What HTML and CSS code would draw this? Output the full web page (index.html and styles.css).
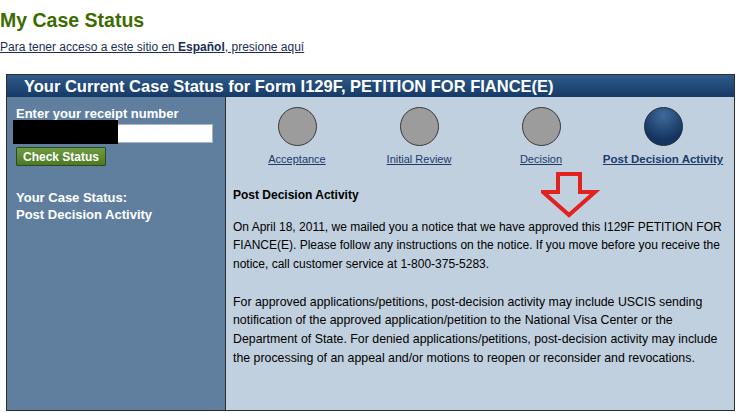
FILE: index.html
```html
<!DOCTYPE html>
<html lang="en">

<head>
  <meta charset="UTF-8">
  <meta name="viewport" content="width=device-width, initial-scale=1.0">
  <title>My Case Status</title>
  <link rel="stylesheet" href="styles.css">
</head>

<body>
  <h1 class="page-title">My Case Status</h1>
  <p class="lang-link"><a href="#">Para tener acceso a este sitio en <b>Español</b>, presione aquí</a></p>

  <div class="status-panel">
    <div class="panel-header">Your Current Case Status for Form I129F, PETITION FOR FIANCE(E)</div>

    <div class="panel-body">
      <div class="side">
        <label class="side-label" for="receipt">Enter your receipt number</label>
        <div class="receipt-field">
          <input type="text" id="receipt">
          <span class="redacted"></span>
        </div>
        <button class="check-btn">Check Status</button>

        <p class="side-status">Your Case Status:<br>Post Decision Activity</p>
      </div>

      <div class="main">
        <div class="steps">
          <div class="step">
            <span class="dot"></span>
            <a href="#">Acceptance</a>
          </div>
          <div class="step">
            <span class="dot"></span>
            <a href="#">Initial Review</a>
          </div>
          <div class="step">
            <span class="dot"></span>
            <a href="#">Decision</a>
          </div>
          <div class="step current">
            <span class="dot"></span>
            <a href="#">Post Decision Activity</a>
          </div>
        </div>

        <!-- red marker drawn over the page -->
        <svg class="marker" width="60" height="48" viewBox="0 0 60 48">
          <path d="M17 3 H39 V21 H54 L28 44 L2 21 H17 Z" fill="none" stroke="#e3211f" stroke-width="4" stroke-linejoin="miter"/>
        </svg>

        <h3 class="status-title">Post Decision Activity</h3>
        <p>On April 18, 2011, we mailed you a notice that we have approved this I129F PETITION FOR FIANCE(E). Please follow any instructions on the notice. If you move before you receive the notice, call customer service at 1-800-375-5283.</p>
        <p class="note">For approved applications/petitions, post-decision activity may include USCIS sending notification of the approved application/petition to the National Visa Center or the Department of State. For denied applications/petitions, post-decision activity may include the processing of an appeal and/or motions to reopen or reconsider and revocations.</p>
      </div>
    </div>
  </div>
</body>

</html>
```

FILE: styles.css
```css
body {
  font-family: Arial, "Liberation Sans", sans-serif;
  margin: 0;
  background: #fff;
  color: #000;
}

.page-title {
  margin: 0;
  padding-top: 9px;
  font-size: 19.5px;
  line-height: 23px;
  color: #3d6b02;
}

.lang-link {
  margin: 8px 0 0;
  font-size: 12px;
  line-height: 14px;
}

.lang-link a {
  color: #1b2c57;
}

.status-panel {
  margin: 20px 0 0 6px;
  width: 727px;
  border: 1px solid #2a2e33;
}

.panel-header {
  height: 22px;
  line-height: 22px;
  padding-left: 17px;
  font-size: 16.5px;
  font-weight: bold;
  color: #fff;
  background: linear-gradient(#2f5b8c, #163a66);
}

.panel-body {
  display: grid;
  grid-template-columns: 219px 1fr;
  height: 313px;
}

.side {
  background: #607f9f;
  border-right: 1px solid #2a2e33;
  padding: 9px 0 0 9px;
  color: #fff;
  font-size: 13px;
  font-weight: bold;
}

.side-label {
  display: block;
  line-height: 16px;
}

.receipt-field {
  position: relative;
  margin: 2px 0 0 -3px;
  width: 200px;
}

.receipt-field input {
  display: block;
  box-sizing: border-box;
  width: 200px;
  height: 19px;
  margin: 0;
  border: 1px solid #a9b6c2;
  background: #fff;
}

.redacted {
  position: absolute;
  left: 0;
  top: -4px;
  width: 105px;
  height: 24px;
  background: #000;
}

.check-btn {
  display: block;
  margin-top: 4px;
  height: 19px;
  padding: 0 6px;
  font-family: inherit;
  font-size: 12px;
  font-weight: bold;
  color: #fff;
  background: linear-gradient(#6f9c42, #4b7a23);
  border: 1px solid #2f4a1a;
  border-radius: 1px;
  cursor: pointer;
}

.side-status {
  margin: 23px 0 0;
  line-height: 17px;
}

.main {
  position: relative;
  background: #c1d0de;
  padding: 0 7px;
  font-size: 12px;
  line-height: 18.7px;
}

.steps {
  display: grid;
  grid-template-columns: repeat(4, 122px);
  padding: 10px 0 0 3px;
}

.step {
  display: flex;
  flex-direction: column;
  align-items: center;
}

.dot {
  width: 37px;
  height: 37px;
  border-radius: 50%;
  border: 1px solid #3a3a3a;
  background: #9c9c9c;
}

.step a {
  margin-top: 7px;
  font-size: 11px;
  line-height: 13px;
  color: #1c3a6c;
  white-space: nowrap;
}

.step.current .dot {
  background: radial-gradient(circle at 50% 20%, #3f6a9c, #14345f 70%);
  border-color: #1e2b3a;
}

.step.current a {
  font-size: 11.5px;
  font-weight: bold;
}

.marker {
  position: absolute;
  left: 315px;
  top: 74px;
}

.status-title {
  margin: 20px 0 0;
  font-size: 12px;
  line-height: 18.7px;
}

.main p {
  margin: 13px 0 0;
}

.main p.note {
  margin-top: 18.7px;
  font-size: 12.35px;
}
```
